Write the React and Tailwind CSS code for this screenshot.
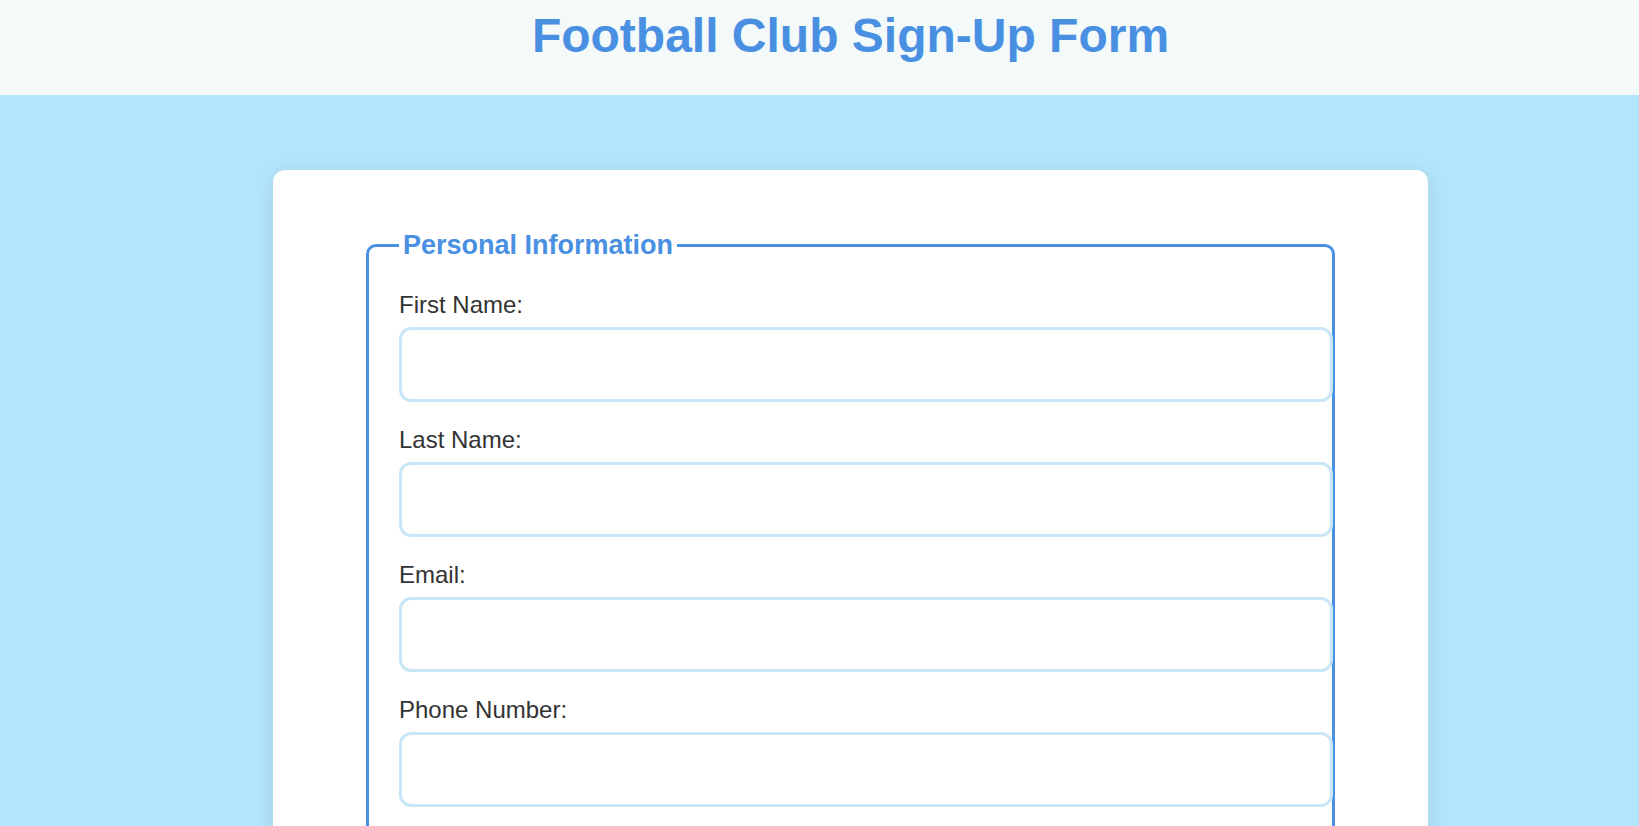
import React from "react";

const fields = ["First Name:", "Last Name:", "Email:", "Phone Number:", "Date of Birth:", "Address:"];

export default function App() {
  return (
    <div
      className="min-h-screen bg-[#b3e5fc]"
      style={{ fontFamily: '"Liberation Sans", Arial, sans-serif' }}
    >
      <header className="h-[95px] bg-[#f4f9f9] pl-[62px] pt-[9px]">
        <h1 className="text-center text-[48px] font-bold leading-[54px] text-[#4a90e2]">
          Football Club Sign-Up Form
        </h1>
      </header>
      <main className="pl-[62px] pt-[75px] pb-10">
        <div className="mx-auto w-[1155px] rounded-xl bg-white pt-[60px] pb-[60px] shadow-[0_4px_20px_rgba(0,0,0,0.1)]">
          <fieldset className="mx-auto w-[969px] min-w-0 rounded-[10px] border-[3px] border-[#4a90e2] px-[30px] pt-[31px] pb-[10px]">
            <legend className="px-[4px] text-[27px] font-bold leading-[30px] text-[#4a90e2]">
              Personal Information
            </legend>
            {fields.map((f) => (
              <div key={f} className="mb-[24px] flex flex-col">
                <label className="mb-[9px] text-[24px] leading-[27px] text-[#333333]">{f}</label>
                <input
                  type="text"
                  className="h-[75px] w-[934px] rounded-[12px] border-[3px] border-[#c8e6f5] bg-white px-3 text-[24px] outline-none"
                />
              </div>
            ))}
          </fieldset>
        </div>
      </main>
    </div>
  );
}
